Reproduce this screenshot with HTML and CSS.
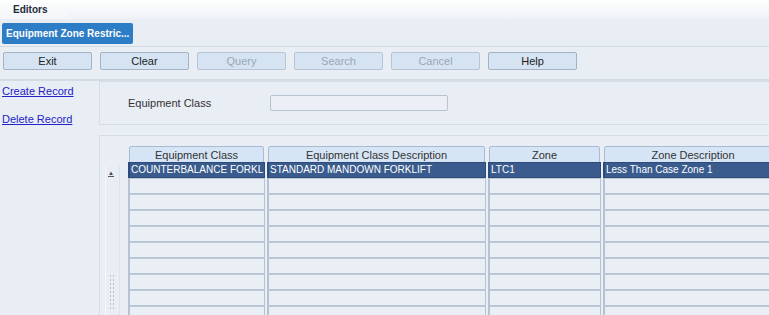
FILE: index.html
```html
<!DOCTYPE html>
<html lang="en">
<head>
    <meta charset="UTF-8">
    <title>Editors - Equipment Zone Restrictions</title>
    <link rel="stylesheet" href="styles.css">
</head>
<body>

    <div class="tabbar">
        <div class="tab">Editors</div>
    </div>

    <div class="titlebar">
        <div class="title-btn">Equipment Zone Restric...</div>
    </div>

    <!-- Toolbar -->
    <div class="toolbar">
        <button class="tool">Exit</button>
        <button class="tool">Clear</button>
        <button class="tool" disabled>Query</button>
        <button class="tool" disabled>Search</button>
        <button class="tool" disabled>Cancel</button>
        <button class="tool">Help</button>
    </div>

    <div class="main">
        <div class="side">
            <a href="#">Create Record</a>
            <a href="#">Delete Record</a>
        </div>

        <div class="content">
            <div class="panel query">
                <label>Equipment Class</label>
                <div class="field"></div>
            </div>

            <div class="panel records">
                <div class="gutter">
                    <span class="arrow">&#9650;</span>
                    <span class="grip"></span>
                </div>
                <div class="grid" id="grid">
                    <div class="head">Equipment Class</div>
                    <div class="head">Equipment Class Description</div>
                    <div class="head">Zone</div>
                    <div class="head">Zone Description</div>
                    <div class="cell sel">COUNTERBALANCE FORKL</div>
                    <div class="cell sel">STANDARD MANDOWN FORKLIFT</div>
                    <div class="cell sel">LTC1</div>
                    <div class="cell sel">Less Than Case Zone 1</div>
                </div>
            </div>
        </div>
    </div>

    <script>
        // leere Zeilen auffuellen
        var grid = document.getElementById('grid');
        for (var i = 0; i < 9 * 4; i++) {
            var c = document.createElement('div');
            c.className = 'cell';
            grid.appendChild(c);
        }
    </script>

</body>
</html>
```

FILE: styles.css
```css
body {
    font-family: 'Liberation Sans', Arial, sans-serif;
    font-size: 11px;
    background-color: #e9edf4;
    color: #333;
    margin: 0;
    padding: 0;
    overflow: hidden;
    height: 315px;
}

.tabbar {
    height: 19px;
    padding-top: 3px;
    box-sizing: border-box;
    background: linear-gradient(#ffffff, #eef1f6);
}

.tab {
    width: 58px;
    height: 16px;
    padding-left: 13px;
    font-size: 10px;
    font-weight: bold;
    color: #1d2a3a;
    line-height: 13px;
    background: linear-gradient(#fbfcfd, #f3f5f9);
    clip-path: polygon(0 0, 60px 0, 72px 100%, 0 100%);
}

.titlebar {
    padding: 4px 2px 2px;
    border-bottom: 1px solid #d3dae4;
}

.title-btn {
    display: inline-block;
    width: 131px;
    height: 21px;
    box-sizing: border-box;
    padding-left: 4px;
    line-height: 21px;
    font-size: 10px;
    font-weight: bold;
    color: #fff;
    background-color: #2d7cc6;
    border-radius: 2px;
    white-space: nowrap;
}

.toolbar {
    display: flex;
    gap: 8px;
    padding: 5px 3px 9px;
    border-bottom: 2px solid #d5dce6;
}

.tool {
    width: 89px;
    height: 18px;
    padding: 0;
    font-family: inherit;
    font-size: 11px;
    color: #222;
    background-color: #d5e3f2;
    border: 1px solid #a3b3c6;
    border-radius: 2px;
}

.tool:disabled {
    color: #9aa7b5;
    border-color: #b7c4d3;
}

.main {
    display: flex;
}

.side {
    width: 99px;
    flex-shrink: 0;
    padding: 4px 0 0 2px;
    box-sizing: border-box;
}

.side a {
    display: block;
    color: #2323c8;
    margin-bottom: 16px;
}

.content {
    flex: 1;
    overflow: hidden;
}

.panel {
    width: 700px;
    border: 1px solid #d6dde7;
    border-right: none;
}

.query {
    height: 42px;
    display: flex;
    align-items: center;
    padding-left: 28px;
    margin-bottom: 10px;
}

.query label {
    color: #333;
    width: 142px;
}

.field {
    width: 176px;
    height: 14px;
    border: 1px solid #b8c3d0;
    border-radius: 2px;
    background-color: #ecf0f6;
}

.records {
    display: flex;
    height: 200px;
    padding-top: 10px;
}

.gutter {
    width: 13px;
    margin: 20px 0 0 5px;
    position: relative;
    border-left: 1px solid #f5f7fa;
    border-right: 1px solid #dde3eb;
}

.arrow {
    position: absolute;
    left: 2px;
    top: 4px;
    font-size: 6px;
    color: #445;
    border-bottom: 1px solid #556;
    line-height: 6px;
}

.grip {
    position: absolute;
    left: 3px;
    top: 108px;
    width: 6px;
    height: 36px;
    background-image: radial-gradient(#b9c2cd 1px, transparent 1px);
    background-size: 3px 4px;
}

.grid {
    display: grid;
    grid-template-columns: 137px 219px 113px 180px;
    grid-auto-rows: 16px;
    column-gap: 2px;
    margin-left: 8px;
}

.head {
    height: 17px;
    margin: 0 1px 3px;
    line-height: 17px;
    text-align: center;
    color: #333;
    background-color: #d6e5f5;
    border: 1px solid #a9bbd0;
    border-radius: 2px;
    box-sizing: border-box;
}

.grid .head {
    grid-row: 1;
    align-self: start;
}

.cell {
    border: 1px solid #b7c3d2;
    border-top-color: #bfcad7;
    border-left-width: 2px;
    background-color: #eaeef5;
    font-size: 10px;
    line-height: 14px;
    padding-left: 1px;
    white-space: nowrap;
    overflow: hidden;
    box-sizing: border-box;
}

.cell.sel {
    background-color: #3a5b8d;
    color: #fff;
    border-color: #2d4a78;
}
```
